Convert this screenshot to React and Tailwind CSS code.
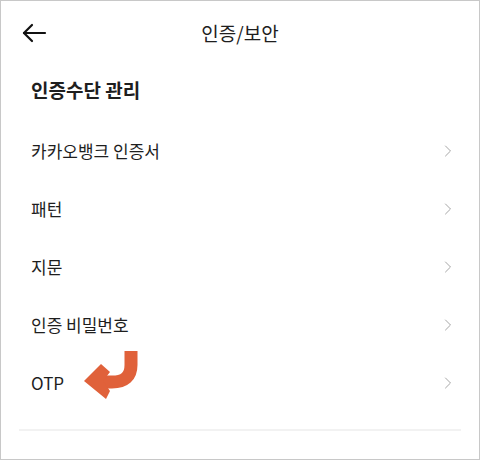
import { ChevronRight } from 'lucide-react';

const items = ['카카오뱅크 인증서', '패턴', '지문', '인증 비밀번호', 'OTP'];

/* ── curved orange pointer ── */
function PointerArrow() {
  return (
    <svg className="absolute left-[79px] top-[-8px]" width="70" height="60" viewBox="80 345 70 60">
      <path d="M 131 350 L 131 364 Q 131 381 112 381 L 100 381" fill="none" stroke="#e0613a" strokeWidth="13" />
      <polygon points="84,380 101,363 110,371 103,380 110,390 106,398" fill="#e0613a" />
    </svg>
  );
}

export default function App() {
  return (
    <div
      className="w-[480px] h-[460px] bg-white border border-[#c8c8c8] overflow-hidden text-[#1e1e1e]"
      style={{ fontFamily: '"Noto Sans CJK KR", "Noto Sans", sans-serif' }}
    >
      {/* Header */}
      <div className="relative h-[63px] flex items-center justify-center">
        <button className="absolute left-[19px] top-[18px] w-[28px] h-[28px] flex items-center justify-center">
          <svg width="26" height="20" viewBox="0 0 26 20" fill="none" stroke="#111" strokeWidth="2.2" strokeLinecap="round" strokeLinejoin="round">
            <path d="M 24 10 L 3 10" />
            <path d="M 11 2 L 3 10 L 11 18" />
          </svg>
        </button>
        <h1 className="text-[19px] leading-none">인증/보안</h1>
      </div>

      {/* Section heading */}
      <h2 className="pl-[30px] pb-[5px] h-[58px] flex items-center text-[19px] font-bold">인증수단 관리</h2>

      {/* Items */}
      <ul>
        {items.map((label) => (
          <li key={label} className="relative h-[58px] flex items-center justify-between pl-[30px] pr-[21px]">
            <span className="text-[17px]">{label}</span>
            <ChevronRight size={20} strokeWidth={1.2} className="text-[#a6a6a6]" />
            {label === 'OTP' && <PointerArrow />}
          </li>
        ))}
      </ul>

      <div className="mt-[17px] mx-[18px] h-[2px] bg-[#f2f2f2]" />
    </div>
  );
}
